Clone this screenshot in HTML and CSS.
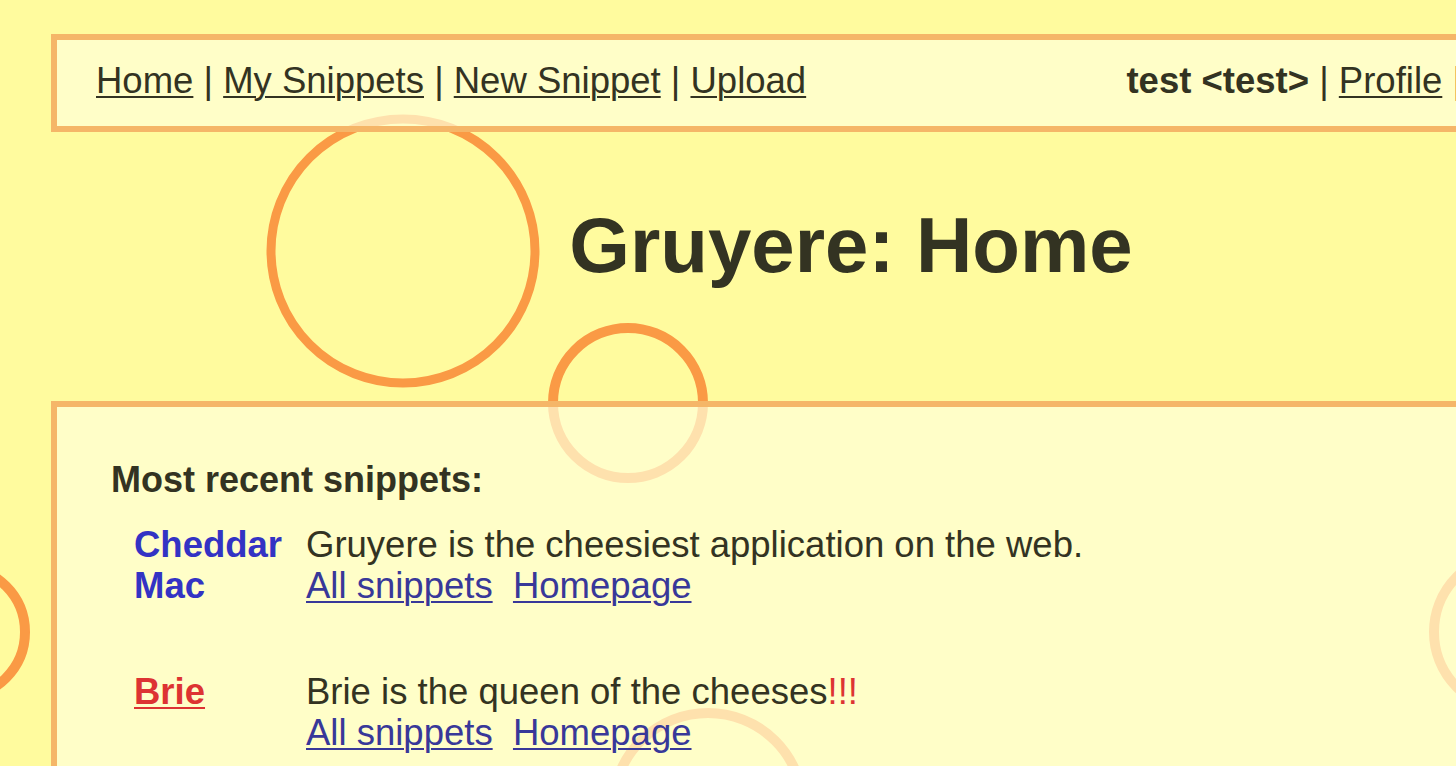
FILE: index.html
```html
<!DOCTYPE html>
<html>
<head>
<meta charset="utf-8">
<title>Gruyere: Home</title>
<link rel="stylesheet" href="styles.css">
</head>
<body>
<svg class="holes" width="1456" height="766" viewBox="0 0 1456 766" aria-hidden="true">
  <g fill="none" stroke="#fa9a45">
    <circle cx="403" cy="251" r="132" stroke-width="9"/>
    <circle cx="628" cy="403" r="75" stroke-width="10"/>
    <circle cx="-40" cy="632" r="65" stroke-width="10"/>
    <circle cx="1512" cy="632" r="78" stroke-width="10"/>
    <circle cx="708" cy="808" r="95" stroke-width="10"/>
  </g>
</svg>
<div class="page">
  <div class="menu">
    <div class="menu-group">
      <a href="#">Home</a> | <a href="#">My Snippets</a> | <a href="#">New Snippet</a> | <a href="#">Upload</a>
    </div>
    <div class="menu-group">
      <b>test &lt;test&gt;</b> | <a href="#">Profile</a> | <a href="#">Sign out</a>
    </div>
  </div>
  <h2 class="title">Gruyere: Home</h2>
  <div class="content">
    <h3 class="section-title">Most recent snippets:</h3>
    <div class="snippets">
      <div class="author">Cheddar Mac</div>
      <div class="snippet">
        <div>Gruyere is the cheesiest application on the web.</div>
        <div class="links"><a href="#" class="snip-link">All snippets</a>&nbsp; <a href="#" class="snip-link">Homepage</a></div>
      </div>
      <div class="author"><a href="#" class="author-red">Brie</a></div>
      <div class="snippet">
        <div>Brie is the queen of the cheeses<span class="bang">!!!</span></div>
        <div class="links"><a href="#" class="snip-link">All snippets</a>&nbsp; <a href="#" class="snip-link">Homepage</a></div>
      </div>
    </div>
  </div>
</div>
</body>
</html>
```
FILE: styles.css
```css
html, body {
  margin: 0;
  padding: 0;
  overflow: hidden;
}
body {
  background: #fffb9e;
  color: #333322;
  font-family: "Liberation Sans", Arial, Helvetica, sans-serif;
  font-size: 36.5px;
  line-height: 41px;
  width: 1456px;
  height: 766px;
  position: relative;
}
.holes {
  position: absolute;
  left: 0;
  top: 0;
  z-index: 0;
}
.page {
  position: relative;
  z-index: 1;
  width: 1600px;
  margin-left: 51px;
  padding-top: 34px;
}
.menu {
  display: flex;
  justify-content: space-between;
  border: 6px solid #f5b668;
  background: rgba(255, 255, 218, 0.7);
  padding: 20px 39px 25px 39px;
  white-space: nowrap;
}
.menu a {
  color: #333322;
  text-decoration: underline;
  text-underline-offset: 3px;
  text-decoration-thickness: 2px;
}
.menu b {
  font-weight: bold;
}
.title {
  margin: 68px 0 111px 0;
  font-size: 78px;
  line-height: 90px;
  font-weight: bold;
  text-align: center;
  color: #333322;
}
.content {
  border: 6px solid #f5b668;
  background: rgba(255, 255, 218, 0.7);
  padding: 52px 0 200px 54px;
}
.section-title {
  margin: 0 0 24px 0;
  font-size: 36px;
  line-height: 41px;
  font-weight: bold;
}
.snippets {
  margin-left: 23px;
  display: grid;
  grid-template-columns: 172px 1fr;
  row-gap: 65px;
}
.author {
  font-weight: bold;
  color: #3333c4;
  width: 150px;
}
.author-red {
  color: #dd3333;
  text-decoration: underline;
  text-decoration-thickness: 2px;
  text-underline-offset: 3px;
}
.snip-link {
  color: #383899;
  text-decoration: underline;
  text-decoration-thickness: 2px;
  text-underline-offset: 3px;
}
.bang {
  color: #dd3333;
}
```
